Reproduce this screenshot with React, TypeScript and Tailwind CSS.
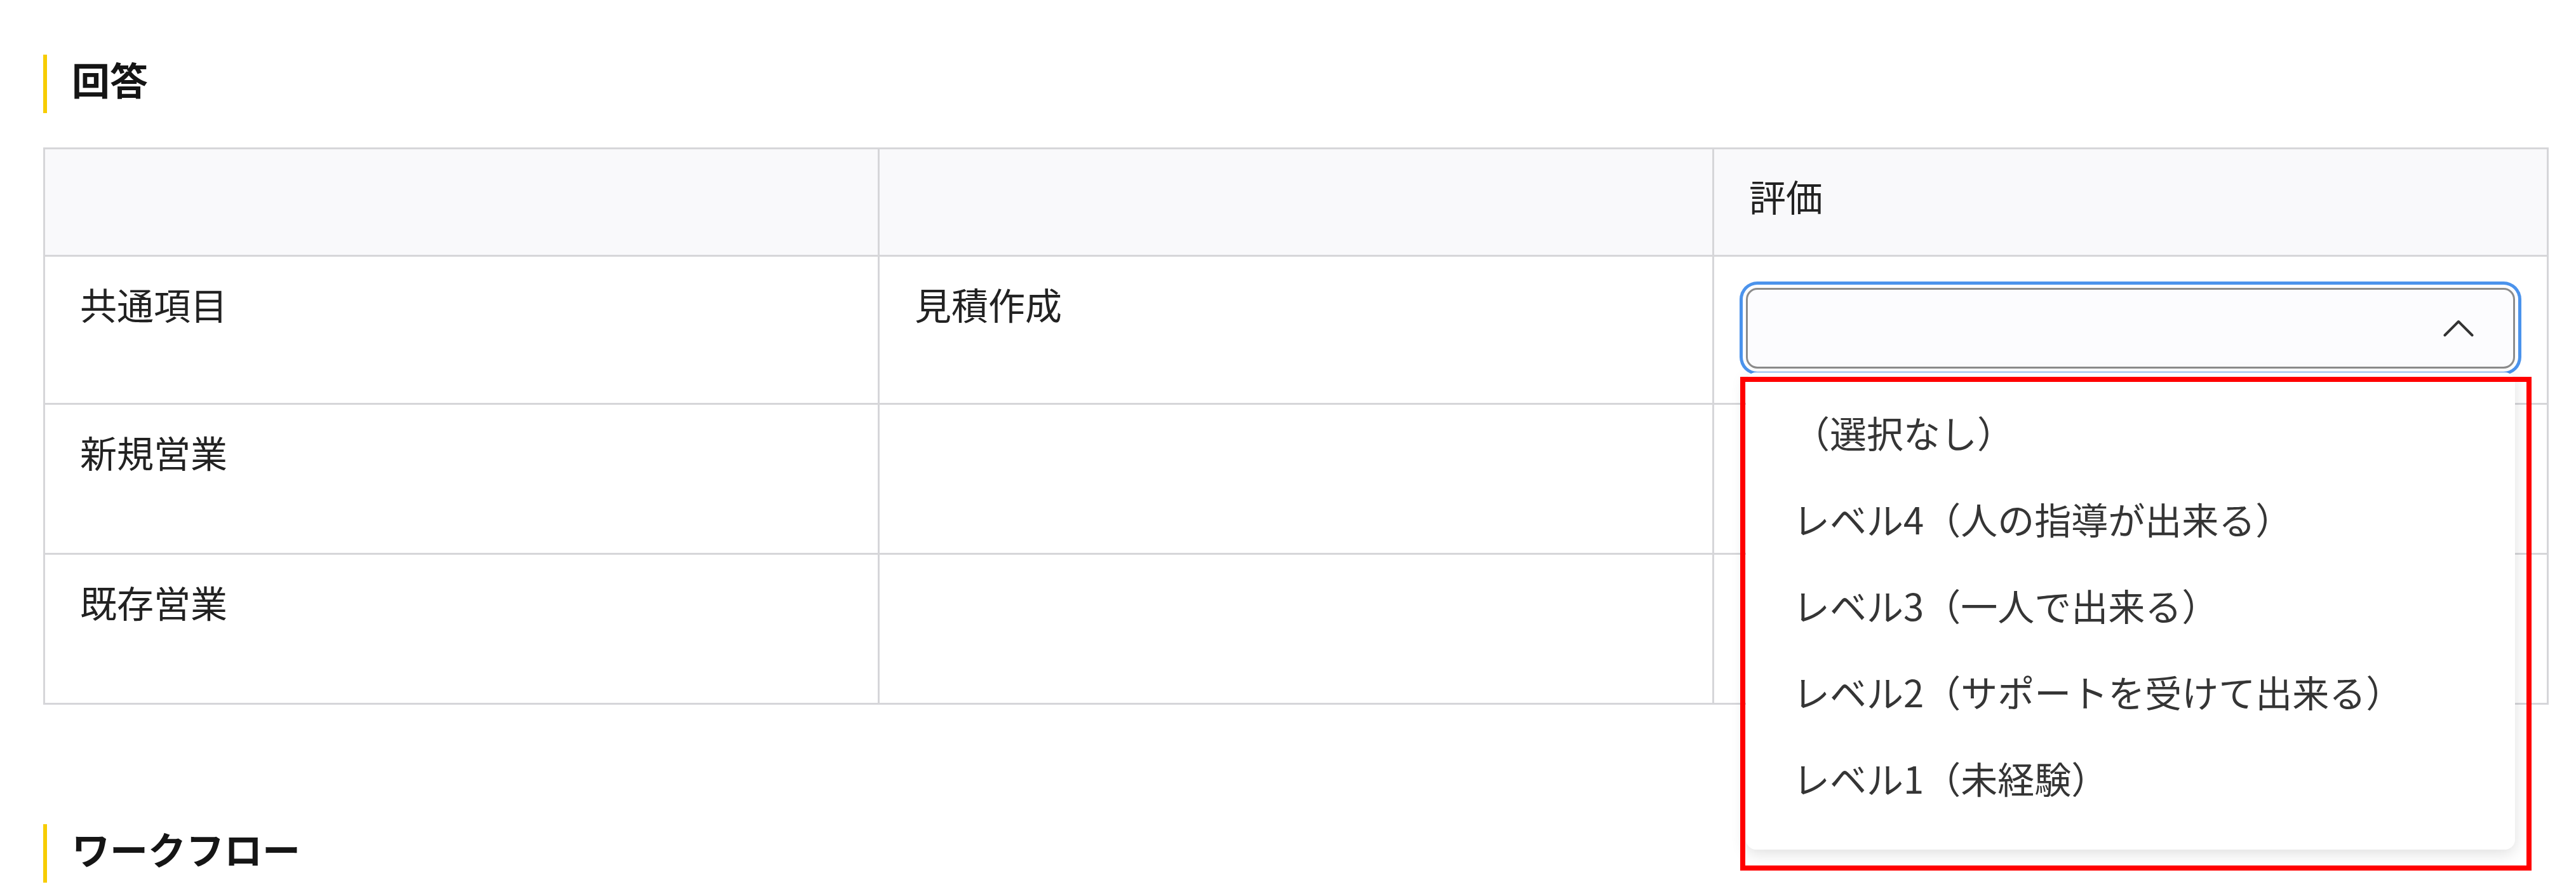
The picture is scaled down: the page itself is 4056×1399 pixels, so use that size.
import React from 'react';

const rows = [
  { group: '共通項目', item: '見積作成', open: true },
  { group: '新規営業', item: '', open: false },
  { group: '既存営業', item: '', open: false },
];

const options = [
  '（選択なし）',
  'レベル4（人の指導が出来る）',
  'レベル3（一人で出来る）',
  'レベル2（サポートを受けて出来る）',
  'レベル1（未経験）',
];

function SectionTitle({ children, className = '' }: { children: React.ReactNode; className?: string }) {
  return (
    <h2 className={`h-[92px] border-l-[6px] border-[#f7cc00] pl-[39px] pt-[8px] text-[60px] font-bold leading-[60px] text-[#151515] ${className}`}>
      {children}
    </h2>
  );
}

function ChevronUp() {
  return (
    <svg width="48" height="27" viewBox="0 0 48 27" fill="none">
      <path d="M2.5 24.5 L24 3 L45.5 24.5" stroke="#333" strokeWidth="4" strokeLinecap="round" strokeLinejoin="round" />
    </svg>
  );
}

function Select({ open }: { open: boolean }) {
  return (
    <div className="relative">
      <div
        className={`flex h-[127px] w-full items-center justify-end rounded-[18px] border-[3px] border-[#8c8c8c] bg-[#fcfcfe] pr-[62px] ${
          open ? 'shadow-[0_0_0_5px_#ffffff,0_0_0_10px_#4b93ec]' : ''
        }`}
      >
        {open && <ChevronUp />}
      </div>

      {open && (
        <>
          <ul className="absolute left-0 right-0 top-[133px] z-10 rounded-[16px] bg-white pb-[45px] pt-[26px] shadow-[0_6px_24px_rgba(0,0,0,0.13)]">
            {options.map((o) => (
              <li key={o} className="py-[24px] pl-[74px] text-[58px] leading-[88px] text-[#353535]">
                {o}
              </li>
            ))}
          </ul>
          {/* annotation frame */}
          <div className="pointer-events-none absolute left-[-9px] top-[140px] z-20 h-[777px] w-[1246px] border-[8px] border-[#ff0000]" />
        </>
      )}
    </div>
  );
}

export default function App() {
  return (
    <div className="min-h-screen bg-white pl-[68px] pt-[86px] font-['Noto_Sans_CJK_JP','Noto_Sans',sans-serif] text-[#222]">
      <SectionTitle>回答</SectionTitle>

      <div className="mt-[54px] grid w-[3945px] grid-cols-3 border-l-[3px] border-t-[3px] border-[#d6d6d9] text-[58px] leading-[87px]">
        <div className="border-b-[3px] border-r-[3px] border-[#d6d6d9] bg-[#f9f9fb] pb-[49px] pt-[30px]" />
        <div className="border-b-[3px] border-r-[3px] border-[#d6d6d9] bg-[#f9f9fb] pb-[49px] pt-[30px]" />
        <div className="border-b-[3px] border-r-[3px] border-[#d6d6d9] bg-[#f9f9fb] px-[55px] pb-[49px] pt-[30px]">評価</div>

        {rows.map((r) => (
          <React.Fragment key={r.group}>
            <div className="border-b-[3px] border-r-[3px] border-[#d6d6d9] px-[55px] pt-[31px]">{r.group}</div>
            <div className="border-b-[3px] border-r-[3px] border-[#d6d6d9] px-[55px] pt-[31px]">{r.item}</div>
            <div className={`border-b-[3px] border-r-[3px] border-[#d6d6d9] px-[50px] pt-[49px] ${r.open ? 'pb-[54px]' : 'pb-[57px]'}`}>
              <Select open={r.open} />
            </div>
          </React.Fragment>
        ))}
      </div>

      <SectionTitle className="mt-[188px]">ワークフロー</SectionTitle>
    </div>
  );
}
